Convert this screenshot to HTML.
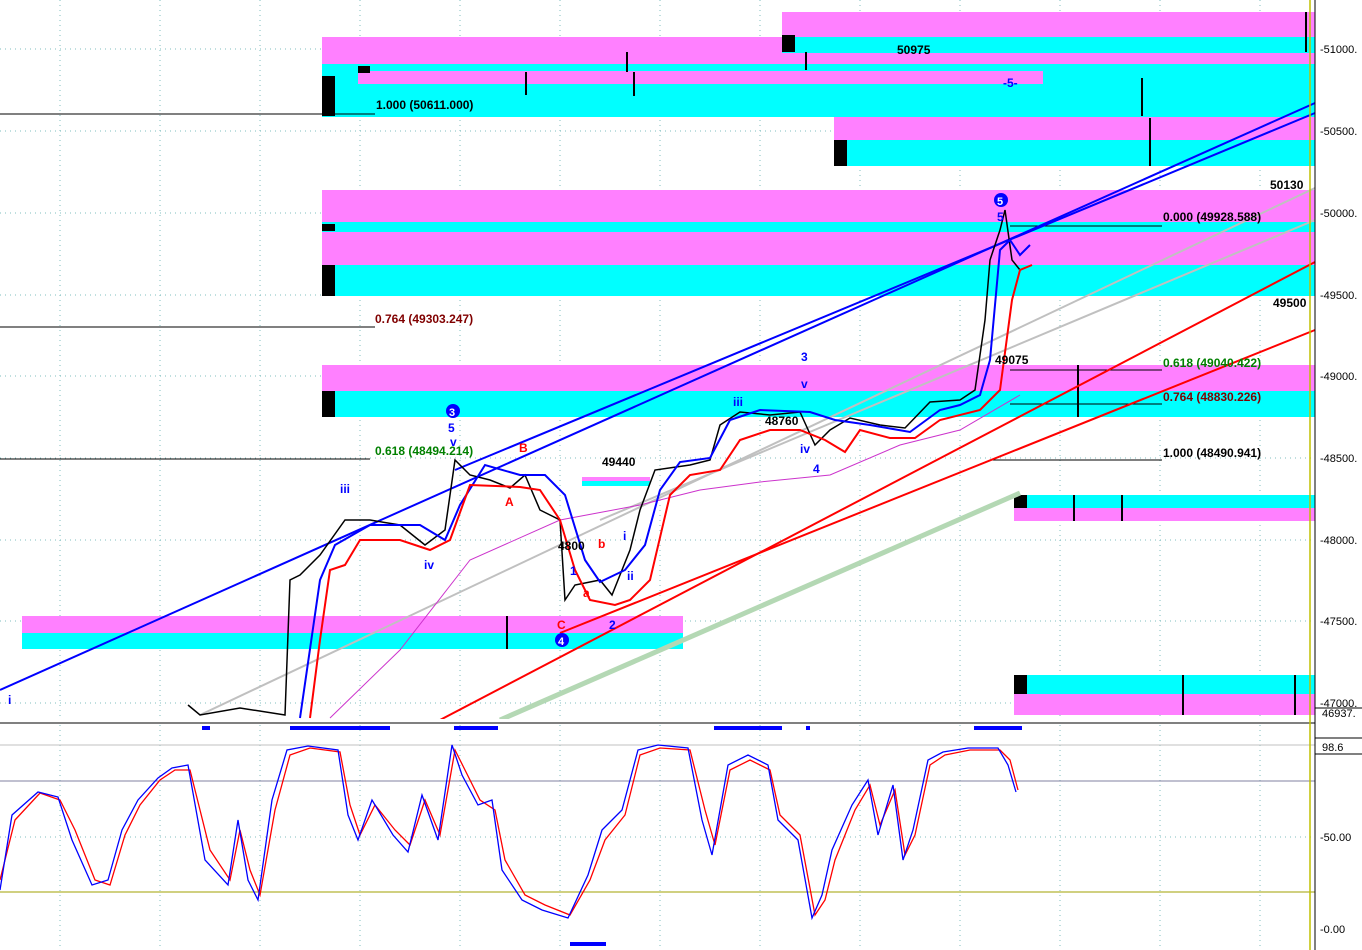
<!DOCTYPE html>
<html><head><style>
html,body{margin:0;padding:0;background:#fff;}
svg{display:block;font-family:"Liberation Sans",sans-serif;}
</style></head><body>
<svg width="1362" height="950" viewBox="0 0 1362 950" xmlns="http://www.w3.org/2000/svg">
<rect width="1362" height="950" fill="#fff"/>
<!-- grid -->
<g stroke="#7fbfbf" stroke-width="1" stroke-dasharray="1,4">
<line x1="0" y1="49" x2="1315" y2="49"/><line x1="0" y1="131" x2="1315" y2="131"/>
<line x1="0" y1="213" x2="1315" y2="213"/><line x1="0" y1="295" x2="1315" y2="295"/>
<line x1="0" y1="376" x2="1315" y2="376"/><line x1="0" y1="458" x2="1315" y2="458"/>
<line x1="0" y1="540" x2="1315" y2="540"/><line x1="0" y1="621" x2="1315" y2="621"/>
<line x1="0" y1="703" x2="1315" y2="703"/>
<line x1="0" y1="837" x2="1315" y2="837"/>
<line x1="60" y1="0" x2="60" y2="950"/><line x1="160" y1="0" x2="160" y2="950"/>
<line x1="260" y1="0" x2="260" y2="950"/><line x1="360" y1="0" x2="360" y2="950"/>
<line x1="460" y1="0" x2="460" y2="950"/><line x1="560" y1="0" x2="560" y2="950"/>
<line x1="660" y1="0" x2="660" y2="950"/><line x1="760" y1="0" x2="760" y2="950"/>
<line x1="860" y1="0" x2="860" y2="950"/><line x1="960" y1="0" x2="960" y2="950"/>
<line x1="1060" y1="0" x2="1060" y2="950"/><line x1="1160" y1="0" x2="1160" y2="950"/>
<line x1="1260" y1="0" x2="1260" y2="950"/>
</g>
<!-- zones -->
<g>
<rect x="322" y="37" width="993" height="27" fill="#ff80ff"/>
<rect x="322" y="64" width="993" height="53" fill="#00ffff"/>
<rect x="358" y="71" width="685" height="13" fill="#ff80ff"/>
<rect x="782" y="12" width="533" height="25" fill="#ff80ff"/>
<rect x="782" y="37" width="533" height="16" fill="#00ffff"/>
<rect x="782" y="53" width="533" height="11" fill="#ff80ff"/>
<rect x="834" y="117" width="481" height="23" fill="#ff80ff"/>
<rect x="834" y="140" width="481" height="26" fill="#00ffff"/>
<rect x="322" y="190" width="993" height="32" fill="#ff80ff"/>
<rect x="322" y="222" width="993" height="10" fill="#00ffff"/>
<rect x="322" y="232" width="993" height="33" fill="#ff80ff"/>
<rect x="322" y="265" width="993" height="31" fill="#00ffff"/>
<rect x="322" y="365" width="993" height="26" fill="#ff80ff"/>
<rect x="322" y="391" width="993" height="26" fill="#00ffff"/>
<rect x="22" y="616" width="661" height="17" fill="#ff80ff"/>
<rect x="22" y="633" width="661" height="16" fill="#00ffff"/>
<rect x="1014" y="495" width="301" height="13" fill="#00ffff"/>
<rect x="1014" y="508" width="301" height="13" fill="#ff80ff"/>
<rect x="1014" y="675" width="301" height="19" fill="#00ffff"/>
<rect x="1014" y="694" width="301" height="21" fill="#ff80ff"/>
<rect x="582" y="477" width="68" height="4" fill="#ff80ff"/>
<rect x="582" y="481" width="68" height="5" fill="#00ffff"/>
</g>
<g fill="#000">
<rect x="322" y="76" width="13" height="40"/><rect x="358" y="66" width="12" height="7"/>
<rect x="782" y="35" width="13" height="17"/><rect x="834" y="140" width="13" height="26"/>
<rect x="322" y="224" width="13" height="7"/><rect x="322" y="265" width="13" height="31"/>
<rect x="322" y="391" width="13" height="26"/><rect x="1014" y="495" width="13" height="13"/>
<rect x="1014" y="675" width="13" height="19"/>
</g>
<g stroke="#000" stroke-width="2">
<line x1="1306" y1="12" x2="1306" y2="52"/><line x1="806" y1="52" x2="806" y2="70"/>
<line x1="627" y1="52" x2="627" y2="72"/><line x1="526" y1="72" x2="526" y2="95"/>
<line x1="634" y1="72" x2="634" y2="96"/><line x1="1142" y1="78" x2="1142" y2="116"/>
<line x1="1150" y1="118" x2="1150" y2="166"/><line x1="1078" y1="365" x2="1078" y2="417"/>
<line x1="507" y1="616" x2="507" y2="649"/><line x1="1074" y1="495" x2="1074" y2="521"/>
<line x1="1122" y1="495" x2="1122" y2="521"/><line x1="1183" y1="675" x2="1183" y2="715"/>
<line x1="1295" y1="675" x2="1295" y2="715"/>
</g>
<!-- fib lines -->
<g stroke="#000" stroke-width="1">
<line x1="0" y1="114" x2="375" y2="114"/><line x1="0" y1="327" x2="375" y2="327"/>
<line x1="0" y1="459" x2="370" y2="459"/><line x1="1010" y1="226" x2="1162" y2="226"/>
<line x1="1010" y1="370" x2="1162" y2="370"/><line x1="1010" y1="404" x2="1162" y2="404"/>
<line x1="990" y1="460" x2="1162" y2="460"/>
</g>
<!-- trend lines -->
<g fill="none">
<line x1="500" y1="720" x2="1020" y2="493" stroke="#b4d8b4" stroke-width="5"/>
<line x1="200" y1="715" x2="1315" y2="188" stroke="#c0c0c0" stroke-width="2"/>
<line x1="600" y1="520" x2="1315" y2="220" stroke="#c0c0c0" stroke-width="2"/>
<line x1="0" y1="690" x2="1315" y2="103" stroke="#0000ff" stroke-width="2"/>
<line x1="455" y1="470" x2="1315" y2="113" stroke="#0000ff" stroke-width="2"/>
<line x1="440" y1="720" x2="1315" y2="262" stroke="#ff0000" stroke-width="2"/>
<line x1="560" y1="633" x2="1315" y2="330" stroke="#ff0000" stroke-width="2"/>
<path d="M330 718 L400 650 L470 560 L560 520 L640 505 L700 490 L760 482 L830 475 L900 445 L960 430 L1020 395" stroke="#cc33cc" stroke-width="1"/>
<!-- price -->
<path d="M188 705 L200 715 L240 708 L285 715 L290 580 L300 575 L320 555 L345 520 L370 520 L400 525 L425 545 L445 530 L455 460 L470 475 L490 480 L510 488 L525 475 L540 510 L560 520 L565 600 L575 585 L600 580 L612 595 L620 575 L630 550 L640 510 L655 470 L690 465 L710 460 L720 425 L740 412 L770 415 L800 412 L815 445 L830 430 L850 418 L880 425 L905 428 L930 402 L960 400 L975 390 L985 320 L990 260 L1000 230 L1005 210 L1012 260 L1020 270" stroke="#000" stroke-width="1.5"/>
<path d="M300 718 L320 580 L335 545 L370 525 L420 525 L445 540 L460 505 L485 465 L520 475 L545 475 L565 495 L585 560 L600 582 L625 570 L645 545 L660 490 L680 462 L710 458 L730 420 L760 410 L810 412 L835 420 L870 425 L910 432 L940 410 L960 405 L980 395 L990 360 L1000 250 L1010 240 L1020 255 L1030 245" stroke="#0000ff" stroke-width="2"/>
<path d="M310 718 L320 640 L330 570 L345 565 L360 540 L400 540 L430 550 L450 540 L470 485 L520 487 L540 490 L560 520 L575 570 L590 600 L615 605 L630 600 L650 580 L670 495 L690 475 L720 470 L740 440 L770 430 L800 430 L825 440 L845 452 L860 430 L890 438 L915 438 L940 420 L980 410 L1000 390 L1012 300 L1020 270 L1032 265" stroke="#ff0000" stroke-width="2"/>
</g>
<!-- labels -->
<g font-size="12" font-weight="bold">
<text x="376" y="109" fill="#000">1.000 (50611.000)</text>
<text x="897" y="54" fill="#000">50975</text>
<text x="1003" y="87" fill="#0000ff">-5-</text>
<text x="1270" y="189" fill="#000">50130</text>
<text x="1163" y="221" fill="#000">0.000 (49928.588)</text>
<text x="1273" y="307" fill="#000">49500</text>
<text x="375" y="323" fill="#800000">0.764 (49303.247)</text>
<text x="1163" y="367" fill="#008000">0.618 (49040.422)</text>
<text x="995" y="364" fill="#000">49075</text>
<text x="1163" y="401" fill="#800000">0.764 (48830.226)</text>
<text x="1163" y="457" fill="#000">1.000 (48490.941)</text>
<text x="375" y="455" fill="#008000">0.618 (48494.214)</text>
<text x="602" y="466" fill="#000">49440</text>
<text x="558" y="550" fill="#000">4800</text>
<text x="765" y="425" fill="#000">48760</text>
<text x="448" y="432" fill="#0000ff">5</text><text x="450" y="446" fill="#0000ff">v</text>
<text x="340" y="493" fill="#0000ff">iii</text><text x="424" y="569" fill="#0000ff">iv</text>
<text x="519" y="452" fill="#ff0000">B</text><text x="505" y="506" fill="#ff0000">A</text>
<text x="557" y="629" fill="#ff0000">C</text><text x="583" y="597" fill="#ff0000">a</text>
<text x="598" y="548" fill="#ff0000">b</text><text x="570" y="575" fill="#0000ff">1</text>
<text x="609" y="629" fill="#0000ff">2</text><text x="623" y="540" fill="#0000ff">i</text>
<text x="627" y="580" fill="#0000ff">ii</text><text x="733" y="406" fill="#0000ff">iii</text>
<text x="801" y="361" fill="#0000ff">3</text><text x="801" y="388" fill="#0000ff">v</text>
<text x="800" y="453" fill="#0000ff">iv</text><text x="813" y="473" fill="#0000ff">4</text>
<text x="997" y="221" fill="#0000ff">5</text><text x="8" y="704" fill="#0000ff">i</text>
</g>
<circle cx="453" cy="411" r="7" fill="#0000ff"/><text x="449" y="416" font-size="11" font-weight="bold" fill="#fff">3</text>
<circle cx="562" cy="640" r="7" fill="#0000ff"/><text x="558" y="645" font-size="11" font-weight="bold" fill="#fff">4</text>
<circle cx="1001" cy="200" r="7" fill="#0000ff"/><text x="997" y="205" font-size="11" font-weight="bold" fill="#fff">5</text>
<!-- panel separator -->
<rect x="0" y="719" width="1315" height="4" fill="#fff"/>
<line x1="0" y1="723" x2="1362" y2="723" stroke="#808080" stroke-width="2"/>
<g fill="#0000ff">
<rect x="202" y="726" width="8" height="4"/><rect x="290" y="726" width="100" height="4"/>
<rect x="454" y="726" width="44" height="4"/><rect x="714" y="726" width="68" height="4"/>
<rect x="806" y="726" width="4" height="4"/><rect x="974" y="726" width="48" height="4"/>
<rect x="570" y="942" width="36" height="4"/>
</g>
<line x1="0" y1="781" x2="1315" y2="781" stroke="#8080a0"/>
<line x1="0" y1="892" x2="1315" y2="892" stroke="#a0a000"/>
<line x1="0" y1="745" x2="1315" y2="745" stroke="#c0c0c0"/>
<g fill="none" stroke-width="1.3">
<path d="M0 880 L15 820 L40 793 L60 800 L75 830 L95 880 L110 885 L125 835 L140 805 L160 780 L175 770 L190 770 L210 850 L230 880 L240 830 L250 870 L260 895 L275 810 L290 755 L310 748 L340 752 L350 805 L360 835 L375 805 L395 830 L410 845 L425 800 L440 835 L455 750 L465 770 L480 800 L495 810 L505 860 L525 895 L545 905 L570 915 L590 880 L605 840 L625 815 L640 755 L660 748 L690 750 L705 810 L715 845 L730 770 L750 760 L770 770 L780 815 L800 835 L815 915 L825 900 L835 860 L855 810 L870 785 L880 825 L895 790 L905 855 L915 835 L930 765 L945 755 L970 750 L1000 750 L1010 760 L1018 790" stroke="#ff0000"/>
<path d="M0 890 L12 815 L38 792 L58 797 L72 840 L92 885 L108 880 L122 830 L138 800 L158 778 L172 768 L188 765 L205 860 L228 885 L238 820 L248 880 L258 900 L272 800 L287 750 L308 746 L338 750 L348 815 L358 840 L372 800 L393 835 L408 852 L422 795 L438 840 L452 745 L462 775 L478 805 L492 800 L502 870 L522 900 L542 910 L568 918 L588 875 L602 830 L622 810 L638 750 L658 745 L688 748 L702 820 L712 855 L728 765 L748 755 L768 765 L778 820 L798 840 L812 918 L822 895 L832 850 L852 805 L868 780 L878 835 L893 785 L903 860 L913 830 L928 760 L943 752 L968 748 L998 748 L1008 765 L1016 792" stroke="#0000ff"/>
</g>
<!-- right axis -->
<rect x="1315" y="0" width="47" height="950" fill="#fff"/>
<line x1="1315" y1="0" x2="1315" y2="950" stroke="#000"/>
<line x1="1310" y1="0" x2="1310" y2="950" stroke="#c0c000" stroke-width="1.5"/>
<g font-size="11" fill="#000">
<text x="1320" y="53">-51000.</text><text x="1320" y="135">-50500.</text>
<text x="1320" y="217">-50000.</text><text x="1320" y="299">-49500.</text>
<text x="1320" y="380">-49000.</text><text x="1320" y="462">-48500.</text>
<text x="1320" y="544">-48000.</text><text x="1320" y="625">-47500.</text>
<text x="1320" y="707">-47000.</text><text x="1322" y="717">46937.</text>
<text x="1322" y="751">98.6</text><text x="1320" y="841">-50.00</text><text x="1320" y="933">-0.00</text>
</g>
<line x1="1315" y1="708" x2="1362" y2="708" stroke="#000"/>
<line x1="1315" y1="738" x2="1362" y2="738" stroke="#000"/>
<line x1="1315" y1="754" x2="1362" y2="754" stroke="#000"/>
</svg>
</body></html>
